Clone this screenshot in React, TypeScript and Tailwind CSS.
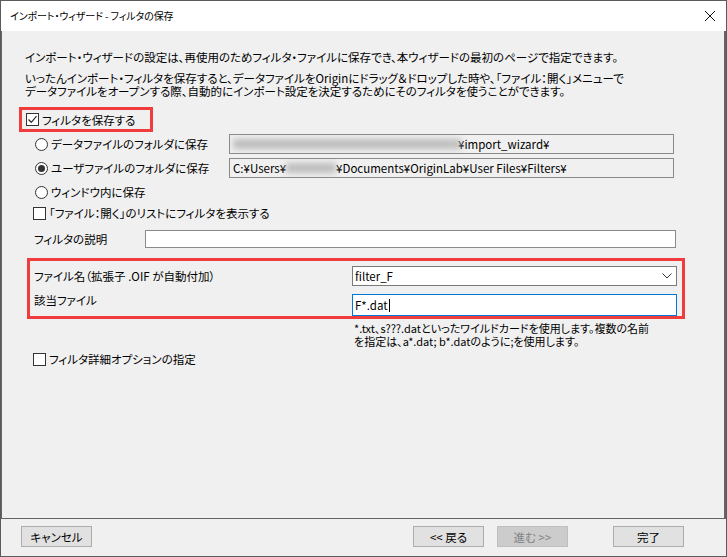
import React from "react";

function CheckBox({ checked }: { checked?: boolean }) {
  return (
    <span className="w-[13px] h-[13px] border border-[#333333] bg-white flex items-center justify-center shrink-0">
      {checked && (
        <svg width="11" height="11" viewBox="0 0 11 11">
          <path d="M1.5 5.5 L4.3 8.3 L9.5 2.2" fill="none" stroke="#333333" strokeWidth="1.3" />
        </svg>
      )}
    </span>
  );
}

function Radio({ checked }: { checked?: boolean }) {
  return (
    <span className="w-[13px] h-[13px] rounded-full border border-[#333333] bg-white flex items-center justify-center shrink-0">
      {checked && <span className="w-[7px] h-[7px] rounded-full bg-[#333333]" />}
    </span>
  );
}

function Blur({ w }: { w: number }) {
  return (
    <span
      className="inline-block h-[10px] bg-[#b0b0b0] blur-[3px] opacity-80 shrink-0"
      style={{ width: w }}
    />
  );
}

function Btn({ children, disabled, className }: { children: React.ReactNode; disabled?: boolean; className?: string }) {
  return (
    <div
      className={
        "w-[71px] h-[21px] flex items-center justify-center border " +
        (disabled ? "bg-[#cccccc] border-[#bfbfbf] text-[#838383] " : "bg-[#e1e1e1] border-[#adadad] text-black ") +
        (className ?? "")
      }
    >
      {children}
    </div>
  );
}

export default function App() {
  return (
    <div className="w-[727px] h-[557px] border border-[#5b5b5b] bg-[#f0f0f0] flex flex-col text-[11.5px] leading-[12px] text-black font-['Noto_Sans_CJK_JP',sans-serif] [font-feature-settings:'palt']">
      {/* title bar */}
      <div className="h-[30px] bg-white flex items-center justify-between pl-[9px] pr-[8px] shrink-0">
        <span className="text-[10px] tracking-[-0.1px]">インポート・ウィザード - フィルタの保存</span>
        <svg width="12" height="12" viewBox="0 0 12 12" className="mr-[2px]">
          <path d="M1 1 L11 11 M11 1 L1 11" stroke="#111111" strokeWidth="1" />
        </svg>
      </div>

      {/* main panel */}
      <div className="h-[488px] border-l border-r-2 border-b border-[#646464] flex flex-col shrink-0">
        <div className="mt-[20px] ml-[23px] h-[12px] whitespace-nowrap">
          インポート・ウィザードの設定は、再使用のためフィルタ・ファイルに保存でき、本ウィザードの最初のページで指定できます。
        </div>
        <div className="mt-[9px] ml-[23px] leading-[13px] whitespace-nowrap">
          <div>いったんインポート・フィルタを保存すると、データファイルをOriginにドラッグ＆ドロップした時や、「ファイル：開く」メニューで</div>
          <div>データファイルをオープンする際、自動的にインポート設定を決定するためにそのフィルタを使うことができます。</div>
        </div>

        <div className="mt-[9px] ml-[17px] w-[134px] h-[25px] border-[3px] border-[#f03c3c] flex items-center gap-[3px] pl-[4px]">
          <CheckBox checked />
          <span>フィルタを保存する</span>
        </div>

        <div className="mt-[2px] h-[20px] flex items-center">
          <div className="ml-[33px] w-[194px] flex items-center gap-[3px]">
            <Radio />
            <span>データファイルのフォルダに保存</span>
          </div>
          <div className="w-[445px] h-[20px] border border-[#8a8a8a] bg-[#f0f0f0] flex items-center pl-[3px] overflow-hidden whitespace-nowrap">
            <Blur w={228} />
            <span className="-ml-[3px]">¥import_wizard¥</span>
          </div>
        </div>

        <div className="mt-[4px] h-[20px] flex items-center">
          <div className="ml-[33px] w-[194px] flex items-center gap-[3px]">
            <Radio checked />
            <span>ユーザファイルのフォルダに保存</span>
          </div>
          <div className="w-[445px] h-[20px] border border-[#8a8a8a] bg-[#f0f0f0] flex items-center pl-[3px] overflow-hidden whitespace-nowrap">
            <span>C:¥Users¥</span>
            <Blur w={50} />
            <span>¥Documents¥OriginLab¥User Files¥Filters¥</span>
          </div>
        </div>

        <div className="mt-[4px] h-[20px] ml-[33px] flex items-center gap-[3px]">
          <Radio />
          <span>ウィンドウ内に保存</span>
        </div>

        <div className="mt-[3px] h-[16px] ml-[31px] flex items-center gap-[3px]">
          <CheckBox />
          <span>「ファイル：開く」のリストにフィルタを表示する</span>
        </div>

        <div className="mt-[9px] h-[18px] flex items-center">
          <span className="ml-[32px] w-[111px]">フィルタの説明</span>
          <div className="w-[531px] h-[18px] border border-[#8a8a8a] bg-white" />
        </div>

        <div className="mt-[10px] ml-[25px] w-[658px] h-[61px] border-[3px] border-[#f03c3c] flex flex-col pt-[5px] pr-[5px]">
          <div className="h-[20px] flex items-center">
            <span className="ml-[4px] w-[318px]">ファイル名（拡張子 .OIF が自動付加）</span>
            <div className="flex-1 h-[20px] border border-[#7a7a7a] bg-white flex items-center justify-between pl-[2px] pr-[4px]">
              <span>filter_F</span>
              <svg width="10" height="6" viewBox="0 0 10 6">
                <path d="M0.5 0.5 L5 5 L9.5 0.5" fill="none" stroke="#333333" strokeWidth="1" />
              </svg>
            </div>
          </div>
          <div className="mt-[8px] h-[22px] flex items-start">
            <span className="ml-[4px] w-[318px]">該当ファイル</span>
            <div className="flex-1 h-[22px] border border-[#0078d7] bg-white flex items-center pl-[2px]">
              <span>F*.dat</span>
              <span className="w-px h-[13px] bg-black ml-[1px]" />
            </div>
          </div>
        </div>

        <div className="mt-[3px] ml-[352px] text-[11px] leading-[13px] whitespace-nowrap">
          <div>*.txt、s???.datといったワイルドカードを使用します。複数の名前</div>
          <div>を指定は、a*.dat; b*.datのように;を使用します。</div>
        </div>

        <div className="mt-[3px] h-[16px] ml-[31px] flex items-center gap-[3px]">
          <CheckBox />
          <span>フィルタ詳細オプションの指定</span>
        </div>
      </div>

      {/* bottom buttons */}
      <div className="flex-1 flex items-start pt-[7px]">
        <Btn className="ml-[20px]">キャンセル</Btn>
        <Btn className="ml-[321px]">&lt;&lt; 戻る</Btn>
        <Btn disabled className="ml-[13px]">進む &gt;&gt;</Btn>
        <Btn className="ml-[45px]">完了</Btn>
      </div>
    </div>
  );
}
